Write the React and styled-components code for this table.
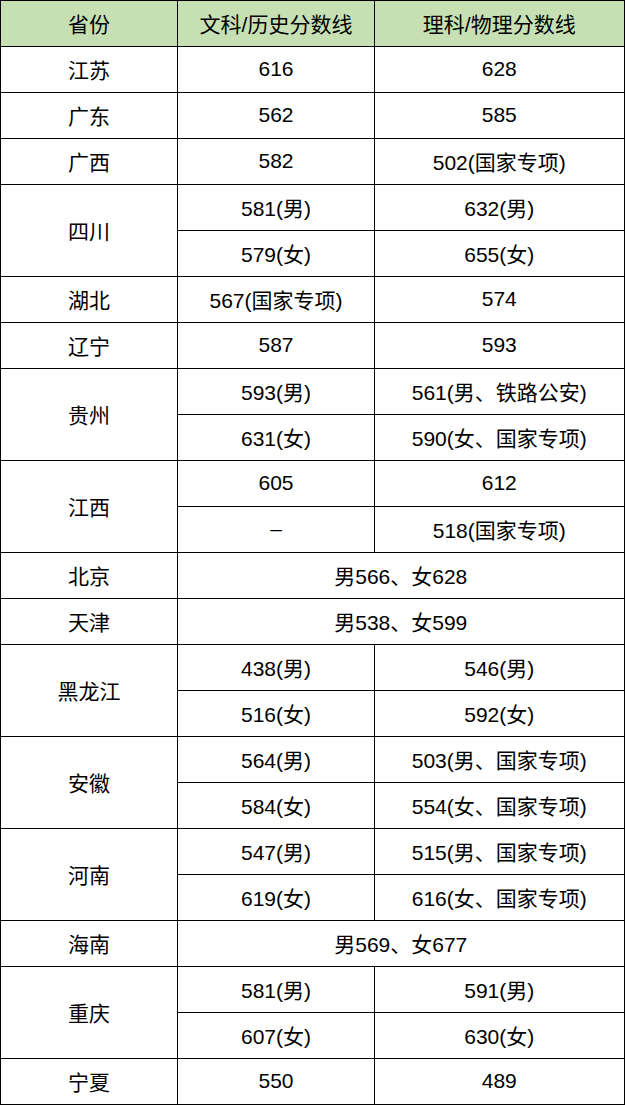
import React from 'react';
import styled, { createGlobalStyle } from 'styled-components';

const GlobalStyle = createGlobalStyle`
  html, body {
    margin: 0;
    padding: 0;
    background: #ffffff;
  }
  body {
    font-family: "Liberation Sans", "Noto Sans CJK SC", sans-serif;
  }
`;

const Table = styled.table`
  border-collapse: collapse;
  table-layout: fixed;
  width: 624px;
  color: #000;
  font-size: 21px;
  border: 1px solid #000;
  border-right-width: 2px;
  border-bottom-width: 2px;
`;

const HeadCell = styled.th`
  height: 43px;
  padding: 0 0 2px;
  border: 1px solid #000;
  background: #c6e0b4;
  font-weight: normal;
  text-align: center;
  vertical-align: middle;
`;

const Cell = styled.td`
  height: 43px;
  padding: 0 0 2px;
  border: 1px solid #000;
  text-align: center;
  vertical-align: middle;
  white-space: nowrap;
`;

const rows = [
  { name: '江苏', lines: [['616', '628']] },
  { name: '广东', lines: [['562', '585']] },
  { name: '广西', lines: [['582', '502(国家专项)']] },
  { name: '四川', lines: [['581(男)', '632(男)'], ['579(女)', '655(女)']] },
  { name: '湖北', lines: [['567(国家专项)', '574']] },
  { name: '辽宁', lines: [['587', '593']] },
  { name: '贵州', lines: [['593(男)', '561(男、铁路公安)'], ['631(女)', '590(女、国家专项)']] },
  { name: '江西', lines: [['605', '612'], ['–', '518(国家专项)']] },
  { name: '北京', merged: '男566、女628' },
  { name: '天津', merged: '男538、女599' },
  { name: '黑龙江', lines: [['438(男)', '546(男)'], ['516(女)', '592(女)']] },
  { name: '安徽', lines: [['564(男)', '503(男、国家专项)'], ['584(女)', '554(女、国家专项)']] },
  { name: '河南', lines: [['547(男)', '515(男、国家专项)'], ['619(女)', '616(女、国家专项)']] },
  { name: '海南', merged: '男569、女677' },
  { name: '重庆', lines: [['581(男)', '591(男)'], ['607(女)', '630(女)']] },
  { name: '宁夏', lines: [['550', '489']] }
];

const ProvinceRows = ({ row }) => {
  if (row.merged) {
    return (
      <tr>
        <Cell>{row.name}</Cell>
        <Cell colSpan={2}>{row.merged}</Cell>
      </tr>
    );
  }
  return row.lines.map((line, i) => (
    <tr key={i}>
      {i === 0 && <Cell rowSpan={row.lines.length}>{row.name}</Cell>}
      <Cell>{line[0]}</Cell>
      <Cell>{line[1]}</Cell>
    </tr>
  ));
};

const App = () => {
  return (
    <>
      <GlobalStyle />
      <Table>
        <colgroup>
          <col style={{ width: 177 }} />
          <col style={{ width: 197 }} />
          <col style={{ width: 250 }} />
        </colgroup>
        <thead>
          <tr>
            <HeadCell>省份</HeadCell>
            <HeadCell>文科/历史分数线</HeadCell>
            <HeadCell>理科/物理分数线</HeadCell>
          </tr>
        </thead>
        <tbody>
          {rows.map((row) => (
            <ProvinceRows key={row.name} row={row} />
          ))}
        </tbody>
      </Table>
    </>
  );
};

export default App;
